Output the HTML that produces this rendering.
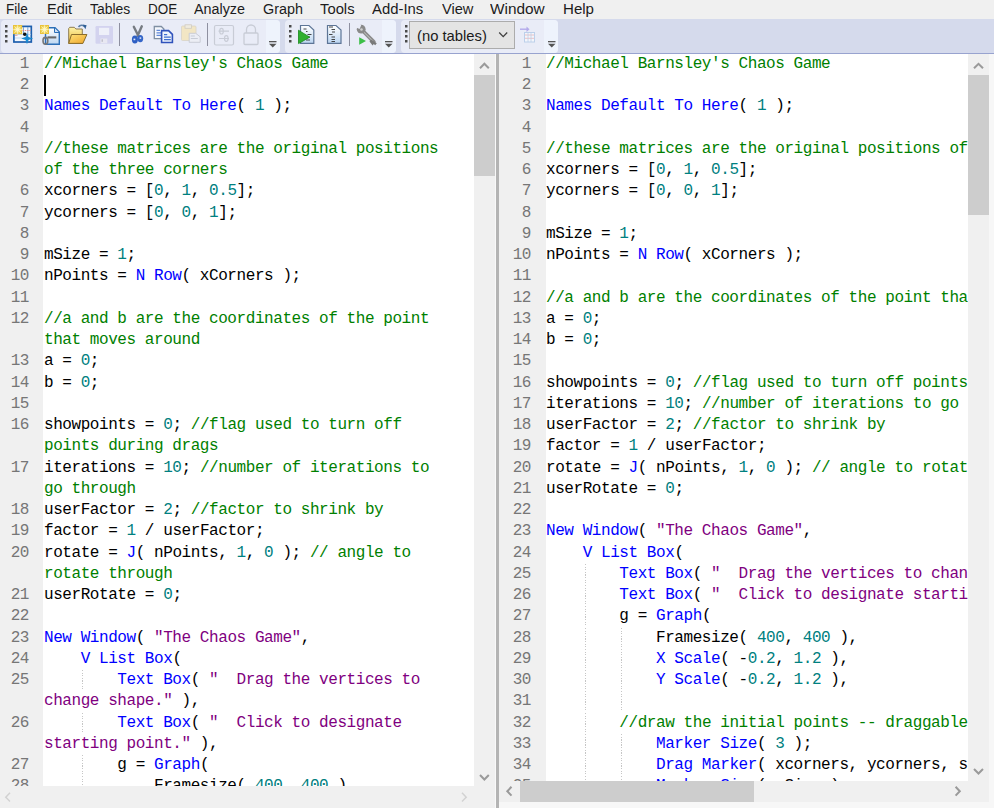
<!DOCTYPE html>
<html><head><meta charset="utf-8">
<style>
*{margin:0;padding:0;box-sizing:border-box}
html,body{width:994px;height:808px;overflow:hidden;background:#f0f0f0;position:relative;font-family:"Liberation Sans",sans-serif}
.abs{position:absolute}
#menu{position:absolute;left:0;top:0;width:994px;height:19px;background:#f0f0f0}
#menu span{position:absolute;top:-1.3px;font-size:15.5px;line-height:19px;color:#1c1c1c;transform-origin:0 0}
#tb{position:absolute;left:0;top:19px;width:994px;height:35px;background:#d5daec;border-bottom:1px solid #98a3cf}
.grp{position:absolute;top:1px;height:32.5px;background:#e9ecf7;border-radius:4px}
.grpl{position:absolute;top:1px;height:32.5px;background:#eef3fc;border-radius:0 4px 4px 0}
.grip{position:absolute;width:2px;height:2px;background:#555}
.sep{position:absolute;top:5px;width:1px;height:23px;background:#8e8e9a}
.chev{position:absolute}
#lp,#rp{position:absolute;top:54px}
.gut{position:absolute;top:0;background:#f0f0f0;overflow:hidden}
.txt{position:absolute;top:0;background:#fff;overflow:hidden}
.row{position:absolute;left:0;white-space:pre;font-family:"Liberation Mono",monospace;font-size:16px;letter-spacing:-0.433px;line-height:21px;height:21px;color:#000}
.num{position:absolute;right:0;width:40px;text-align:right;font-family:"Liberation Mono",monospace;font-size:16px;letter-spacing:-0.433px;line-height:21px;color:#767676}
.c{color:#008000}.k{color:#0000ff}.n{color:#008080}.s{color:#800080}
.guide{position:absolute;width:1px;height:21.25px;background:repeating-linear-gradient(to bottom,#c6c6c6 0,#c6c6c6 1.3px,transparent 1.3px,transparent 2.6px)}
.vs{position:absolute;background:#f0f0f0}
.thumb{position:absolute;background:#cdcdcd}
</style></head><body>
<div id="menu">
<span style="left:6.4px;transform:scaleX(0.872)">File</span>
<span style="left:46.7px;transform:scaleX(0.938)">Edit</span>
<span style="left:89.5px;transform:scaleX(0.898)">Tables</span>
<span style="left:147.5px;transform:scaleX(0.868)">DOE</span>
<span style="left:194.4px;transform:scaleX(0.924)">Analyze</span>
<span style="left:262.8px;transform:scaleX(0.926)">Graph</span>
<span style="left:320.4px;transform:scaleX(0.955)">Tools</span>
<span style="left:372.4px;transform:scaleX(0.959)">Add-Ins</span>
<span style="left:441.5px;transform:scaleX(0.942)">View</span>
<span style="left:490.0px;transform:scaleX(0.992)">Window</span>
<span style="left:562.5px;transform:scaleX(0.972)">Help</span>
</div>
<div id="tb">
 <div class="grp" style="left:1px;width:279px"></div>
 <div class="grpl" style="left:266px;width:14px"></div>
 <div class="grp" style="left:285px;width:111px"></div>
 <div class="grpl" style="left:382px;width:14px"></div>
 <div class="grp" style="left:401px;width:157px"></div>
 <div class="grpl" style="left:544px;width:14px"></div>
</div>
<svg class="abs" style="left:0;top:0" width="994" height="54" viewBox="0 0 994 54">
<defs>
 <linearGradient id="docg" x1="0" y1="0" x2="0" y2="1"><stop offset="0" stop-color="#ffffff"/><stop offset="1" stop-color="#bcd6f2"/></linearGradient>
 <linearGradient id="fold" x1="0" y1="0" x2="0" y2="1"><stop offset="0" stop-color="#fff3a8"/><stop offset="1" stop-color="#e9b838"/></linearGradient>
 <linearGradient id="flap" x1="0" y1="0" x2="1" y2="1"><stop offset="0" stop-color="#ffe27a"/><stop offset="1" stop-color="#eea52a"/></linearGradient>
 <radialGradient id="star"><stop offset="0" stop-color="#fffbe0"/><stop offset="0.5" stop-color="#f6e27a"/><stop offset="1" stop-color="#e8c23a"/></radialGradient>
</defs>
<!-- grips -->
<g fill="#4a4a4a">
 <rect x="5" y="25" width="2.5" height="2.5"/><rect x="5" y="30" width="2.5" height="2.5"/><rect x="5" y="35" width="2.5" height="2.5"/><rect x="5" y="40" width="2.5" height="2.5"/>
 <rect x="289" y="25" width="2.5" height="2.5"/><rect x="289" y="30" width="2.5" height="2.5"/><rect x="289" y="35" width="2.5" height="2.5"/><rect x="289" y="40" width="2.5" height="2.5"/>
 <rect x="405" y="25" width="2.5" height="2.5"/><rect x="405" y="30" width="2.5" height="2.5"/><rect x="405" y="35" width="2.5" height="2.5"/><rect x="405" y="40" width="2.5" height="2.5"/>
</g>
<!-- separators -->
<g fill="#8e90a0">
 <rect x="119" y="23" width="1" height="23"/><rect x="207" y="23" width="1" height="23"/><rect x="349" y="23" width="1" height="23"/>
</g>
<!-- icon1 new data table -->
<g>
 <rect x="13.9" y="26.4" width="17.4" height="15.6" fill="#f4f8fd" stroke="#1d5fae" stroke-width="1.7"/>
 <path d="M15 34.5h15.5M15 38h15.5" stroke="#c5d8ef" stroke-width="1"/>
 <path d="M23.5 27v8M27.8 27v14.5" stroke="#7da6d8" stroke-width="1"/>
 <path d="M22.5 30.5h8" stroke="#e58080" stroke-width="0.9" stroke-dasharray="1.4 0.9"/>
 <path d="M15 35.5h2.5" stroke="#f0a0a0" stroke-width="0.9"/>
 <rect x="13" y="25" width="9.2" height="9.2" fill="url(#star)"/>
 <path d="M17.6 25.3v8.6M13.3 29.6h8.6M14.3 26.3l6.6 6.6M20.9 26.3l-6.6 6.6" stroke="#fff8c8" stroke-width="0.9" opacity="0.8"/>
 <circle cx="24.8" cy="34.3" r="1.8" fill="#111"/>
 <path d="M27 33 L28.4 36.9 L33.2 38.4 L28.4 39.9 L27 44.2 L25.6 39.9 L21.2 38.4 L25.6 36.9Z" fill="#1a8ad0"/>
</g>
<!-- icon2 new script -->
<g>
 <path d="M45.5 27.7h9.5l4.3 4.3v12.3h-13.8z" fill="url(#docg)" stroke="#2c6fb8" stroke-width="1.4"/>
 <path d="M54.5 28v4.5h4.5" fill="#cfe0f5" stroke="#2c6fb8" stroke-width="1"/>
 <path d="M47.5 37.4h8.8" stroke="#686868" stroke-width="2.1"/>
 <ellipse cx="45.4" cy="40.8" rx="2.4" ry="3.4" fill="none" stroke="#777" stroke-width="1.6"/>
 <rect x="40" y="25" width="9" height="9" fill="url(#star)"/>
 <path d="M44.5 25.3v8.4M40.3 29.5h8.4M41.3 26.3l6.4 6.4M47.7 26.3l-6.4 6.4" stroke="#fff8c8" stroke-width="0.9" opacity="0.8"/>
</g>
<!-- icon3 open folder -->
<g>
 <path d="M68.7 43.4V28.5l1-1.2h4.6l1.6 1.7h6.4v14.4z" fill="url(#fold)" stroke="#8d7b52" stroke-width="1"/>
 <path d="M71.5 34.5h15.4l-4 8.9H68.7z" fill="url(#flap)" stroke="#8a6d2c" stroke-width="1"/>
 <path d="M78.5 27c1.5-2.3 4.5-2.3 5.8-0.5" fill="none" stroke="#5c7fa8" stroke-width="1.6"/>
 <path d="M82.6 24.5l4 0.8-1.2 4z" fill="#2f5e95"/>
</g>
<!-- icon4 save disabled -->
<g>
 <rect x="95.5" y="26" width="17.5" height="17.8" rx="1.2" fill="#d3d3ef"/>
 <rect x="99" y="27.8" width="10.2" height="7.2" fill="#eef0f9"/>
 <rect x="100.5" y="38.5" width="6.8" height="4.8" fill="#e8e8f2"/>
 <rect x="101.5" y="39.3" width="1.5" height="2.5" fill="#c0c0cc"/>
</g>
<!-- icon5 scissors -->
<g>
 <path d="M133.8 26.8 L138.3 35.8 M141.8 26.3 L137.6 35.8" stroke="#767b82" stroke-width="2.4" stroke-linecap="round"/>
 <ellipse cx="134.9" cy="39.5" rx="3" ry="3.9" fill="#2e5fc4"/>
 <ellipse cx="140.3" cy="38.6" rx="2.9" ry="3.7" fill="#3566c8"/>
 <rect x="133.5" y="38.6" width="1.8" height="1.6" fill="#e8eefa"/>
 <rect x="139.6" y="37.3" width="1.6" height="1.6" fill="#d8e2f5"/>
</g>
<!-- icon6 copy -->
<g>
 <path d="M154.3 26.5h7l2.6 2.6v9.6h-9.6z" fill="#f4f7fc" stroke="#7f8fa3" stroke-width="1.3"/>
 <path d="M156.5 30.3h3.5M156.5 32.8h5M156.5 35.3h5" stroke="#5f88d8" stroke-width="1.3"/>
 <path d="M161.6 30.6h7l3.8 3.8v8.1h-10.8z" fill="#eef3fc" stroke="#2f52bb" stroke-width="1.6"/>
 <path d="M164 34.6h3.2M164 37.1h6.8M164 39.6h6.8" stroke="#3f6fd0" stroke-width="1.4"/>
</g>
<!-- icon7 paste disabled -->
<g>
 <rect x="181.5" y="26" width="14.5" height="14.5" rx="1" fill="#f2e6c4" stroke="#d8d3c6" stroke-width="0.8"/>
 <rect x="185" y="24.8" width="6.5" height="3.5" fill="#efebe0" stroke="#cfcbc0" stroke-width="0.8"/>
 <path d="M189.2 33.3h6.5l4.5 3.5v5.5h-11z" fill="#eceef5" stroke="#c6c9d2" stroke-width="0.9"/>
 <path d="M190.8 36h4M190.8 38.5h7" stroke="#c3c7d3" stroke-width="0.9"/>
</g>
<!-- icon8 disabled sliders -->
<g fill="none" stroke="#c8ccd6" stroke-width="1.2">
 <rect x="214.5" y="25.5" width="19" height="19.5" rx="1.5"/>
 <path d="M218.5 31.2h10.5M219 38.5h10"/>
 <ellipse cx="221.5" cy="31.2" rx="1.8" ry="2.8"/>
 <ellipse cx="226.3" cy="38.5" rx="1.8" ry="2.8"/>
</g>
<!-- icon9 lock disabled -->
<g fill="none" stroke="#c8ccd6" stroke-width="1.3">
 <path d="M246.5 33v-3.5a4.5 4.5 0 0 1 9 0V33"/>
 <rect x="244" y="33" width="14" height="11.5" rx="1"/>
</g>
<!-- chevrons -->
<g fill="#555">
 <rect x="269" y="41" width="7.5" height="1.3"/><path d="M269 43.8h7.5l-3.75 3.7z"/>
 <rect x="385" y="41" width="7.5" height="1.3"/><path d="M385 43.8h7.5l-3.75 3.7z"/>
 <rect x="548" y="41" width="7.5" height="1.3"/><path d="M548 43.8h7.5l-3.75 3.7z"/>
</g>
<!-- run script -->
<g>
 <path d="M300.5 25.5h8.5l4.8 4.5v13.3h-13.3z" fill="url(#docg)" stroke="#5d7596" stroke-width="1.2"/>
 <path d="M303.5 29h3M306 31.5h1.5M307.5 34.5h4M308 37h2M306 40h4" stroke="#333" stroke-width="0.9"/>
 <path d="M298.5 30.2 L309.7 37.2 L298.5 43.6Z" fill="#2fb030" stroke="#188a1b" stroke-width="0.8"/>
</g>
<!-- doc icon -->
<g>
 <path d="M327.5 25.5h8.5l5 4.5v13.3h-13.5z" fill="url(#docg)" stroke="#5d7596" stroke-width="1.2"/>
 <path d="M329 27h4M331.5 29.5h3.5M332 32h3M329 34.5h3.5M331.5 37h3.5M331.5 39.5h3.5M331.5 41.5h3.5" stroke="#333" stroke-width="0.9"/>
</g>
<!-- wrench -->
<g>
 <path d="M363 31 L373.8 41.8" stroke="#8c8c8c" stroke-width="3.8" stroke-linecap="round"/>
 <path d="M363.3 31.6 L373.3 41.6" stroke="#c4c4c4" stroke-width="1"/>
 <circle cx="361.2" cy="29.2" r="4.4" fill="#8a8a8a"/>
 <path d="M356.2 27.6 L359.6 28.9 L361.2 25.2 L358.5 23.8Z" fill="#e9ecf7"/>
 <circle cx="361.5" cy="29.5" r="1.3" fill="#d0d0d0"/>
 <path d="M371 39.6 L376.8 43.2 L375.2 45.3 L373.8 44 L372.6 45.6 L369.5 41.5Z" fill="#7a7a7a"/>
 <path d="M359.2 37.3 L366 41 L359.2 44.8Z" fill="#3cbf48"/>
</g>
<!-- combobox -->
<rect x="409.5" y="21.5" width="105" height="27" fill="#e4e4e4" stroke="#acacac" stroke-width="1"/>
<path d="M499.2 32.5 L503.2 36.6 L507.2 32.5" fill="none" stroke="#404040" stroke-width="1.3"/>
<!-- add table disabled -->
<g>
 <path d="M520 29.2h8" stroke="#b3aaea" stroke-width="1.4"/>
 <path d="M526.5 26.5l3 2.7-3 2.7z" fill="#b3aaea"/>
 <rect x="524.5" y="32.5" width="10" height="9.5" fill="#f3f6fb" stroke="#bcd0ea" stroke-width="1"/>
 <path d="M525 35h9M525 38.3h9" stroke="#e9b3b8" stroke-width="0.8"/>
 <path d="M528 33v9M531 33v9" stroke="#bcd0ea" stroke-width="0.8"/>
</g>
</svg>

<div class="abs" style="left:416.8px;top:21.8px;font-size:15px;line-height:28px;color:#1a1a1a;transform:scaleX(0.985);transform-origin:0 0">(no tables)</div>

<div id="lp" style="left:0;width:496px;height:754px">
 <div class="gut" style="left:0;width:43px;height:732px">
  <div style="position:absolute;left:0;width:29px;top:0;height:732px"><div class="num" style="top:0px">1</div>
<div class="num" style="top:21px">2</div>
<div class="num" style="top:42px">3</div>
<div class="num" style="top:64px">4</div>
<div class="num" style="top:85px">5</div>
<div class="num" style="top:127px">6</div>
<div class="num" style="top:149px">7</div>
<div class="num" style="top:170px">8</div>
<div class="num" style="top:191px">9</div>
<div class="num" style="top:212px">10</div>
<div class="num" style="top:234px">11</div>
<div class="num" style="top:255px">12</div>
<div class="num" style="top:297px">13</div>
<div class="num" style="top:319px">14</div>
<div class="num" style="top:340px">15</div>
<div class="num" style="top:361px">16</div>
<div class="num" style="top:404px">17</div>
<div class="num" style="top:446px">18</div>
<div class="num" style="top:467px">19</div>
<div class="num" style="top:489px">20</div>
<div class="num" style="top:531px">21</div>
<div class="num" style="top:552px">22</div>
<div class="num" style="top:574px">23</div>
<div class="num" style="top:595px">24</div>
<div class="num" style="top:616px">25</div>
<div class="num" style="top:659px">26</div>
<div class="num" style="top:701px">27</div>
<div class="num" style="top:722px">28</div></div>
 </div>
 <div class="txt" style="left:43px;width:431px;height:732px">
  <div style="position:absolute;left:1px;top:0"><div class="row" style="top:0px"><span class="c">//Michael Barnsley's Chaos Game</span></div>
<div class="row" style="top:21px"></div>
<div class="row" style="top:42px"><span class="k">Names Default To Here</span>( <span class="n">1</span> );</div>
<div class="row" style="top:64px"></div>
<div class="row" style="top:85px"><span class="c">//these matrices are the original positions</span></div>
<div class="row" style="top:106px"><span class="c">of the three corners</span></div>
<div class="row" style="top:127px">xcorners = [<span class="n">0</span>, <span class="n">1</span>, <span class="n">0.5</span>];</div>
<div class="row" style="top:149px">ycorners = [<span class="n">0</span>, <span class="n">0</span>, <span class="n">1</span>];</div>
<div class="row" style="top:170px"></div>
<div class="row" style="top:191px">mSize = <span class="n">1</span>;</div>
<div class="row" style="top:212px">nPoints = <span class="k">N Row</span>( xCorners );</div>
<div class="row" style="top:234px"></div>
<div class="row" style="top:255px"><span class="c">//a and b are the coordinates of the point</span></div>
<div class="row" style="top:276px"><span class="c">that moves around</span></div>
<div class="row" style="top:297px">a = <span class="n">0</span>;</div>
<div class="row" style="top:319px">b = <span class="n">0</span>;</div>
<div class="row" style="top:340px"></div>
<div class="row" style="top:361px">showpoints = <span class="n">0</span>; <span class="c">//flag used to turn off</span></div>
<div class="row" style="top:382px"><span class="c">points during drags</span></div>
<div class="row" style="top:404px">iterations = <span class="n">10</span>; <span class="c">//number of iterations to</span></div>
<div class="row" style="top:425px"><span class="c">go through</span></div>
<div class="row" style="top:446px">userFactor = <span class="n">2</span>; <span class="c">//factor to shrink by</span></div>
<div class="row" style="top:467px">factor = <span class="n">1</span> / userFactor;</div>
<div class="row" style="top:489px">rotate = <span class="k">J</span>( nPoints, <span class="n">1</span>, <span class="n">0</span> ); <span class="c">// angle to</span></div>
<div class="row" style="top:510px"><span class="c">rotate through</span></div>
<div class="row" style="top:531px">userRotate = <span class="n">0</span>;</div>
<div class="row" style="top:552px"></div>
<div class="row" style="top:574px"><span class="k">New Window</span>( <span class="s">"The Chaos Game"</span>,</div>
<div class="row" style="top:595px">    <span class="k">V List Box</span>(</div>
<div class="row" style="top:616px">        <span class="k">Text Box</span>( <span class="s">"  Drag the vertices to</span></div>
<div class="guide" style="top:616px;left:38px"></div>
<div class="row" style="top:637px"><span class="s">change shape."</span> ),</div>
<div class="row" style="top:659px">        <span class="k">Text Box</span>( <span class="s">"  Click to designate</span></div>
<div class="guide" style="top:659px;left:38px"></div>
<div class="row" style="top:680px"><span class="s">starting point."</span> ),</div>
<div class="row" style="top:701px">        g = <span class="k">Graph</span>(</div>
<div class="guide" style="top:701px;left:38px"></div>
<div class="row" style="top:722px">            Framesize( <span class="n">400</span>, <span class="n">400</span> ),</div>
<div class="guide" style="top:722px;left:38px"></div></div>
  <div style="position:absolute;left:1px;top:21px;width:2px;height:21px;background:#000"></div>
 </div>
 <div class="vs" style="left:474px;top:0;width:21px;height:754px">
  <div class="thumb" style="left:0;top:21px;width:21px;height:101px"></div>
 </div>
 <div class="vs" style="left:0;top:732px;width:474px;height:22px"></div>
</div>
<div class="abs" style="left:495px;top:54px;width:1px;height:754px;background:#f9f9f9"></div>
<div class="abs" style="left:496px;top:54px;width:3px;height:754px;background:#b4b4b4"></div>

<div id="rp" style="left:499px;width:495px;height:754px">
 <div class="gut" style="left:0;width:47px;height:727px">
  <div style="position:absolute;left:0;width:32px;top:0;height:726px"><div class="num" style="top:0px">1</div>
<div class="num" style="top:21px">2</div>
<div class="num" style="top:42px">3</div>
<div class="num" style="top:64px">4</div>
<div class="num" style="top:85px">5</div>
<div class="num" style="top:106px">6</div>
<div class="num" style="top:127px">7</div>
<div class="num" style="top:149px">8</div>
<div class="num" style="top:170px">9</div>
<div class="num" style="top:191px">10</div>
<div class="num" style="top:212px">11</div>
<div class="num" style="top:234px">12</div>
<div class="num" style="top:255px">13</div>
<div class="num" style="top:276px">14</div>
<div class="num" style="top:297px">15</div>
<div class="num" style="top:319px">16</div>
<div class="num" style="top:340px">17</div>
<div class="num" style="top:361px">18</div>
<div class="num" style="top:382px">19</div>
<div class="num" style="top:404px">20</div>
<div class="num" style="top:425px">21</div>
<div class="num" style="top:446px">22</div>
<div class="num" style="top:467px">23</div>
<div class="num" style="top:489px">24</div>
<div class="num" style="top:510px">25</div>
<div class="num" style="top:531px">26</div>
<div class="num" style="top:552px">27</div>
<div class="num" style="top:574px">28</div>
<div class="num" style="top:595px">29</div>
<div class="num" style="top:616px">30</div>
<div class="num" style="top:637px">31</div>
<div class="num" style="top:659px">32</div>
<div class="num" style="top:680px">33</div>
<div class="num" style="top:701px">34</div>
<div class="num" style="top:722px">35</div></div>
 </div>
 <div class="txt" style="left:47px;width:422px;height:727px">
  <div style="position:absolute;left:0px;top:0"><div class="row" style="top:0px"><span class="c">//Michael Barnsley's Chaos Game</span></div>
<div class="row" style="top:21px"></div>
<div class="row" style="top:42px"><span class="k">Names Default To Here</span>( <span class="n">1</span> );</div>
<div class="row" style="top:64px"></div>
<div class="row" style="top:85px"><span class="c">//these matrices are the original positions of the three corners</span></div>
<div class="row" style="top:106px">xcorners = [<span class="n">0</span>, <span class="n">1</span>, <span class="n">0.5</span>];</div>
<div class="row" style="top:127px">ycorners = [<span class="n">0</span>, <span class="n">0</span>, <span class="n">1</span>];</div>
<div class="row" style="top:149px"></div>
<div class="row" style="top:170px">mSize = <span class="n">1</span>;</div>
<div class="row" style="top:191px">nPoints = <span class="k">N Row</span>( xCorners );</div>
<div class="row" style="top:212px"></div>
<div class="row" style="top:234px"><span class="c">//a and b are the coordinates of the point that moves around</span></div>
<div class="row" style="top:255px">a = <span class="n">0</span>;</div>
<div class="row" style="top:276px">b = <span class="n">0</span>;</div>
<div class="row" style="top:297px"></div>
<div class="row" style="top:319px">showpoints = <span class="n">0</span>; <span class="c">//flag used to turn off points during drags</span></div>
<div class="row" style="top:340px">iterations = <span class="n">10</span>; <span class="c">//number of iterations to go through</span></div>
<div class="row" style="top:361px">userFactor = <span class="n">2</span>; <span class="c">//factor to shrink by</span></div>
<div class="row" style="top:382px">factor = <span class="n">1</span> / userFactor;</div>
<div class="row" style="top:404px">rotate = <span class="k">J</span>( nPoints, <span class="n">1</span>, <span class="n">0</span> ); <span class="c">// angle to rotate through</span></div>
<div class="row" style="top:425px">userRotate = <span class="n">0</span>;</div>
<div class="row" style="top:446px"></div>
<div class="row" style="top:467px"><span class="k">New Window</span>( <span class="s">"The Chaos Game"</span>,</div>
<div class="row" style="top:489px">    <span class="k">V List Box</span>(</div>
<div class="row" style="top:510px">        <span class="k">Text Box</span>( <span class="s">"  Drag the vertices to change shape."</span> ),</div>
<div class="guide" style="top:510px;left:39px"></div>
<div class="row" style="top:531px">        <span class="k">Text Box</span>( <span class="s">"  Click to designate starting point."</span> ),</div>
<div class="guide" style="top:531px;left:39px"></div>
<div class="row" style="top:552px">        g = <span class="k">Graph</span>(</div>
<div class="guide" style="top:552px;left:39px"></div>
<div class="row" style="top:574px">            Framesize( <span class="n">400</span>, <span class="n">400</span> ),</div>
<div class="guide" style="top:574px;left:39px"></div>
<div class="guide" style="top:574px;left:75px"></div>
<div class="row" style="top:595px">            <span class="k">X Scale</span>( -<span class="n">0.2</span>, <span class="n">1.2</span> ),</div>
<div class="guide" style="top:595px;left:39px"></div>
<div class="guide" style="top:595px;left:75px"></div>
<div class="row" style="top:616px">            <span class="k">Y Scale</span>( -<span class="n">0.2</span>, <span class="n">1.2</span> ),</div>
<div class="guide" style="top:616px;left:39px"></div>
<div class="guide" style="top:616px;left:75px"></div>
<div class="row" style="top:637px"></div>
<div class="guide" style="top:637px;left:39px"></div>
<div class="guide" style="top:637px;left:75px"></div>
<div class="row" style="top:659px">        <span class="c">//draw the initial points -- draggable</span></div>
<div class="guide" style="top:659px;left:39px"></div>
<div class="row" style="top:680px">            <span class="k">Marker Size</span>( <span class="n">3</span> );</div>
<div class="guide" style="top:680px;left:39px"></div>
<div class="guide" style="top:680px;left:75px"></div>
<div class="row" style="top:701px">            <span class="k">Drag Marker</span>( xcorners, ycorners, show</div>
<div class="guide" style="top:701px;left:39px"></div>
<div class="guide" style="top:701px;left:75px"></div>
<div class="row" style="top:722px">            <span class="k">Marker Size</span>( mSize );</div>
<div class="guide" style="top:722px;left:39px"></div>
<div class="guide" style="top:722px;left:75px"></div></div>
 </div>
 <div class="vs" style="left:469px;top:0;width:21px;height:727px">
  <div class="thumb" style="left:0;top:21px;width:21px;height:140px"></div>
 </div>
 <div class="vs" style="left:0;top:727px;width:490px;height:21px">
  <div class="thumb" style="left:21px;top:0;width:234px;height:21px"></div>
 </div>
 <div class="abs" style="left:490px;top:0;width:5px;height:754px;background:#f7f7f7"></div>
 <div class="abs" style="left:0;top:748px;width:495px;height:6px;background:#f7f7f7"></div>
</div>
<svg class="abs" style="left:0;top:54px" width="994" height="754" viewBox="0 54 994 754">
<g fill="none" stroke="#9a9a9a" stroke-width="2">
 <path d="M480 68.3 L484.4 63.8 L488.8 68.3"/>
 <path d="M480 775 L484.4 779.5 L488.8 775"/>
 <path d="M974 68.3 L978.5 63.8 L983 68.3"/>
 <path d="M974 769 L978.5 773.5 L983 769"/>
 <path d="M511.5 786.8 L507.3 791.2 L511.5 795.6"/>
 <path d="M955.6 786.8 L959.8 791.2 L955.6 795.6"/>
</g>
<g fill="none" stroke="#d2d2d2" stroke-width="1.5">
 <path d="M10 792.8 L5.8 797.2 L10 801.6"/>
 <path d="M462 792.8 L466.2 797.2 L462 801.6"/>
</g>
</svg>

</body></html>
